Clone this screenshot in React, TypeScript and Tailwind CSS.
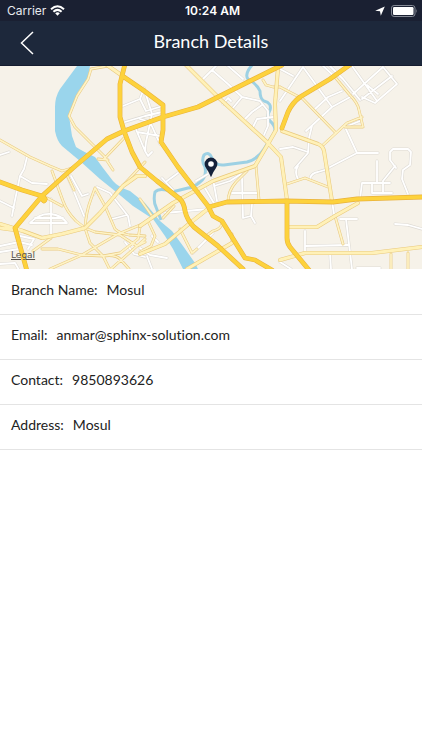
import React from 'react';

const RIVER =
  'M77 66 L60 89 Q55 97 55 107 V131 Q57 141 62 146 L80 161 L100 179 L115 191 L133 206 L153 219 L165 236 L173 249 L183 269 H198 L195 263 L183 246 L172 231 L160 221 L145 203 L130 191 Q118 187 113 181 L103 168 L95 157 Q82 151 76 147 L72 136 L69 116 L78 92 L88 78 L90 66 Z';

const STREAM =
  'M253 64 Q244 74 248 79 Q257 84 260 91 Q260 99 264 101 Q272 103 270 110 Q266 117 270 121 Q277 127 274 133 L264 149 Q258 159 247 162 L224 165 Q215 166 212 158 Q209 151 204 155 Q201 161 205 167 Q207 177 200 182 Q193 188 188 188 L172 192 Q160 187 155 192 Q153 201 156 207 L161 220';

const HIGHWAYS = [
  'M125 64 L120 84 V117 L124 131 L132 152 L140 167 L157 181 L180 199 Q184 203 185 211 Q187 220 194 227 L218 246 L243 269',
  'M124 77 L143 90 L163 105 V130 L161 142 L178 167 L208 206 L213 216 L222 221 L245 258 L255 260 L272 270',
  'M27 271 L15 228 L42 196 L73 168 L107 139 L124 131 L163 117 L198 107 L282 65',
  'M0 182 L22 190 L42 196 Q47 199 44 201 L42 199',
  'M209 207 L227 202 L285 201 L333 202 L357 199 L422 197',
  'M287 201 V238 Q287 243 290 247 L309 270',
  'M351 64 L330 79 L300 97 Q292 103 288 112 L282 128',
];

const MAIN_ROADS = [
  'M0 224 L23 231 L42 238 L62 234 L85 228 L100 213 L123 186 L137 176 H145',
  'M0 228 L15 230',
  'M140 226 L173 203 L213 181 L255 166 L268 144 L276 130 L275 104 L278 68',
  'M185 64 L220 99 L267 142 L281 157 L287 200',
  'M282 131 L318 144 Q323 146 324 151 L332 201',
  'M140 254 L165 244 L190 223 L209 208',
  'M187 269 L232 243',
  'M290 227 H317 L335 216 L358 203',
  'M280 260 L305 253 H372 L422 247',
  'M124 77 L107 65',
];

const MINOR_ROADS = [
  'M108 66 L91 69 L88 79 L77 96 L69 116 L75 127 L104 156 L113 170',
  'M124 138 L104 159 M98 159 L108 160',
  'M0 140 L30 157 L50 166 L62 171 L72 168',
  'M52 171 L63 201 Q67 212 76 221 L85 228 L90 243 L103 256 L110 270',
  'M47 198 L62 206 M67 175 L74 190',
  'M85 228 Q86 212 91 199 L95 188 L105 206 L115 229 Q119 233 129 235 L145 236',
  'M85 228 L95 232 L120 235 L137 246 L145 242',
  'M33 251 L51 238 M42 249 H58 L82 255 L103 256 L120 253 L138 239 L140 227',
  'M50 269 L82 255 L118 234 L145 223',
  'M103 256 Q116 254 121 260 L129 269 M111 269 L145 239',
  'M115 194 L145 162',
  'M148 221 L155 236 L151 246 L140 252',
  'M140 199 L152 216',
  'M335 216 L343 244',
  'M391 254 V270 M408 253 V270',
  'M287 184 L305 178 L328 187',
  'M335 77 L349 94 Q358 103 359 110 L363 127 L345 127',
  'M322 146 L347 123 L362 117',
  'M280 87 L303 99 L335 132',
  'M263 80 L266 85 L273 87 H280',
  'M222 222 Q222 229 213 231 L206 236 M228 202 Q228 191 236 182 L247 171 M256 166 L259 200',
  'M180 229 L192 253 L197 249',
  'M174 206 L163 218 M232 243 V234',
];

const STREETS = [
  'M123 106 L140 99 L146 111 L163 106 M125 122 L145 116 L162 112 M135 127 L145 151 M140 99 L144 88 L152 114 L146 142 L145 151 L148 156 L152 152',
  'M137 132 L160 136 M140 119 L150 122 L160 144',
  'M0 155 L9 152 M27 157 L24 169 L20 176 L32 183 L47 184 M20 176 L14 205 L12 216 M0 201 L14 208',
  'M203 79 L216 66 M212 70 L228 84 L242 97 L260 101 L268 111 V126 L264 135 M227 65 L243 79 M242 97 L232 109 M245 119 L252 112 L262 105 M252 129 L257 119 L273 117',
  'M223 104 L228 98 L231 101',
  'M280 101 L303 67 L332 107 L352 96 M280 69 L293 76 M306 131 L332 107 M315 109 L328 97 L342 91',
  'M322 65 L335 77 M352 66 L377 101 M383 67 L397 84 L375 103 L362 97 M383 67 L353 94 M392 76 L362 99 M330 66 L343 79 L360 100 M367 85 L378 94',
  'M312 126 L309 138 L308 153 L295 168 M280 149 L293 147 L308 152 M345 127 L357 153 H378 M357 153 L330 167 M345 127 L360 121',
  'M396 168 L390 160 V152 L393 149 H408 L411 152 L410 165 L403 170 L402 179 L408 194 M377 161 V183',
  'M395 166 L383 181 V193 M360 199 L362 183 H390 M372 184 V193 H392 M298 166 Q294 172 298 179 M310 179 Q311 173 318 172 L328 169',
  'M332 201 L334 214 M340 219 H357 M346 219 L352 269 M305 231 V253 M306 246 L348 245 M330 254 L331 269 M395 224 L408 225 L422 229 M357 268 H380',
  'M162 178 L173 190 M167 181 L178 173 M165 213 L208 209 M205 188 L215 205 M213 179 L217 201 M214 186 L230 181 L241 174 M242 178 L243 218 L251 216 L255 223 M232 193 H258 M252 204 L251 216 M193 253 L213 233 M196 181 L208 174',
  'M30 223 Q40 213 51 214 Q61 215 67 223 Z M35 218 H63 M51 199 V238 M68 178 L75 194 L84 216 M71 176 L82 196 L88 194 M94 194 L97 187 L110 193 L128 216 L130 226 M112 219 L127 215',
  'M0 246 L19 242 L32 245 M0 252 L19 249 M20 236 L34 239 L28 249 M0 264 L15 263 L19 270',
  'M140 248 L150 255 L167 258 M147 256 L152 269 M152 236 L158 242 M280 262 L291 269 M125 242 L134 254 L145 257',
];

const details = [
  { label: 'Branch Name', value: 'Mosul' },
  { label: 'Email', value: 'anmar@sphinx-solution.com' },
  { label: 'Contact', value: '9850893626' },
  { label: 'Address', value: 'Mosul' },
];

interface RoadsProps {
  paths: string[];
  color: string;
  casing: string;
  width: number;
}

const Roads: React.FC<RoadsProps> = ({ paths, color, casing, width }) => {
  const d = paths.join(' ');
  return (
    <g fill="none" strokeLinejoin="round" strokeLinecap="round">
      <path d={d} stroke={casing} strokeWidth={width + 1.1} />
      <path d={d} stroke={color} strokeWidth={width} />
    </g>
  );
};

const StatusBar: React.FC = () => (
  <div className="grid h-[21px] grid-cols-3 items-center bg-[#1a2032] pl-[7px] pr-1 font-['Inter',sans-serif] text-[12px] text-[#e8eaee]">
    <div className="flex items-center gap-1">
      <span>Carrier</span>
      <svg className="h-[11px] w-[15px]" viewBox="0 0 15 11" fill="none" stroke="#fff" strokeWidth="2">
        <path d="M1 4.2 Q7.5 -1.8 14 4.2" />
        <path d="M3.4 6.8 Q7.5 3 11.6 6.8" />
        <path d="M5.2 8.2 Q7.5 6.4 9.8 8.2 L7.5 10.7 Z" fill="#fff" stroke="none" />
      </svg>
    </div>
    <span className="text-center font-semibold text-white">10:24 AM</span>
    <div className="flex items-center justify-end gap-[6px]">
      <svg className="h-[10px] w-[10px]" viewBox="0 0 10 10" fill="#fff">
        <path d="M9.8 0.4 L5.8 9.8 L5 5.2 L0.2 4.8 Z" />
      </svg>
      <svg className="h-[12px] w-[27px]" viewBox="0 0 27 12">
        <rect x="0.5" y="0.5" width="23.5" height="11" rx="2.6" fill="none" stroke="#858a96" />
        <rect x="2" y="2" width="20.5" height="8" rx="1.2" fill="#fff" />
        <path d="M25.2 4 Q26.6 6 25.2 8 Z" fill="#858a96" />
      </svg>
    </div>
  </div>
);

const BranchMap: React.FC = () => (
  <div className="relative h-[203px] bg-[#f6f2e9]">
    <svg
      className="block h-full w-full"
      viewBox="0 66 422 203"
      preserveAspectRatio="xMidYMid slice"
      role="img"
      aria-label="Mosul"
    >
      <path d={RIVER} fill="#9ad5ec" />
      <path d={STREAM} fill="none" stroke="#9dd1e4" strokeWidth="3" strokeLinejoin="round" />
      <Roads paths={STREETS} color="#ffffff" casing="#dddad4" width={1.8} />
      <Roads paths={MINOR_ROADS} color="#fef3c6" casing="#e9ca82" width={1.7} />
      <Roads paths={MAIN_ROADS} color="#fff1b8" casing="#e9c97c" width={2.9} />
      <Roads paths={HIGHWAYS} color="#fdd23c" casing="#e9b23c" width={3.7} />
      {/* Branch pin */}
      <path
        d="M211 177.3 Q209 172 206.3 168.6 Q204.6 166.5 204.6 164 A6.4 6.4 0 0 1 217.4 164 Q217.4 166.5 215.7 168.6 Q213 172 211 177.3 Z"
        fill="#14213a"
      />
      <circle cx="211" cy="164" r="2.8" fill="#fff" />
    </svg>
    <a
      href="#legal"
      className="absolute bottom-2 left-[11px] font-['DejaVu_Sans',sans-serif] text-[9px] leading-3 text-[#55524d] underline"
    >
      Legal
    </a>
  </div>
);

const App: React.FC = () => {
  return (
    <div className="min-h-screen bg-white font-['Lato',sans-serif] [font-variant-ligatures:none]">
      <StatusBar />
      <header className="grid h-[45px] grid-cols-[56px_1fr_56px] items-center border-b border-[#151c30] bg-[#1d283b]">
        <button type="button" aria-label="Back" className="flex h-full items-center pl-5">
          <svg className="h-6 w-[14px]" viewBox="0 0 14 24" fill="none" stroke="#fff" strokeWidth="1.5">
            <path d="M13 1 L1.5 12 L13 23" />
          </svg>
        </button>
        <h1 className="pb-1 text-center text-[18px] leading-6 text-white">Branch Details</h1>
      </header>

      <main>
        <BranchMap />
        <dl className="pt-px">
          {details.map((item) => (
            <div
              key={item.label}
              className="flex min-h-[45px] items-center gap-[9px] border-b border-[#e4e4e4] px-[11px] pb-1 text-[14px] leading-5 text-[#222]"
            >
              <dt>{item.label}:</dt>
              <dd>{item.value}</dd>
            </div>
          ))}
        </dl>
      </main>
    </div>
  );
};

export default App;
